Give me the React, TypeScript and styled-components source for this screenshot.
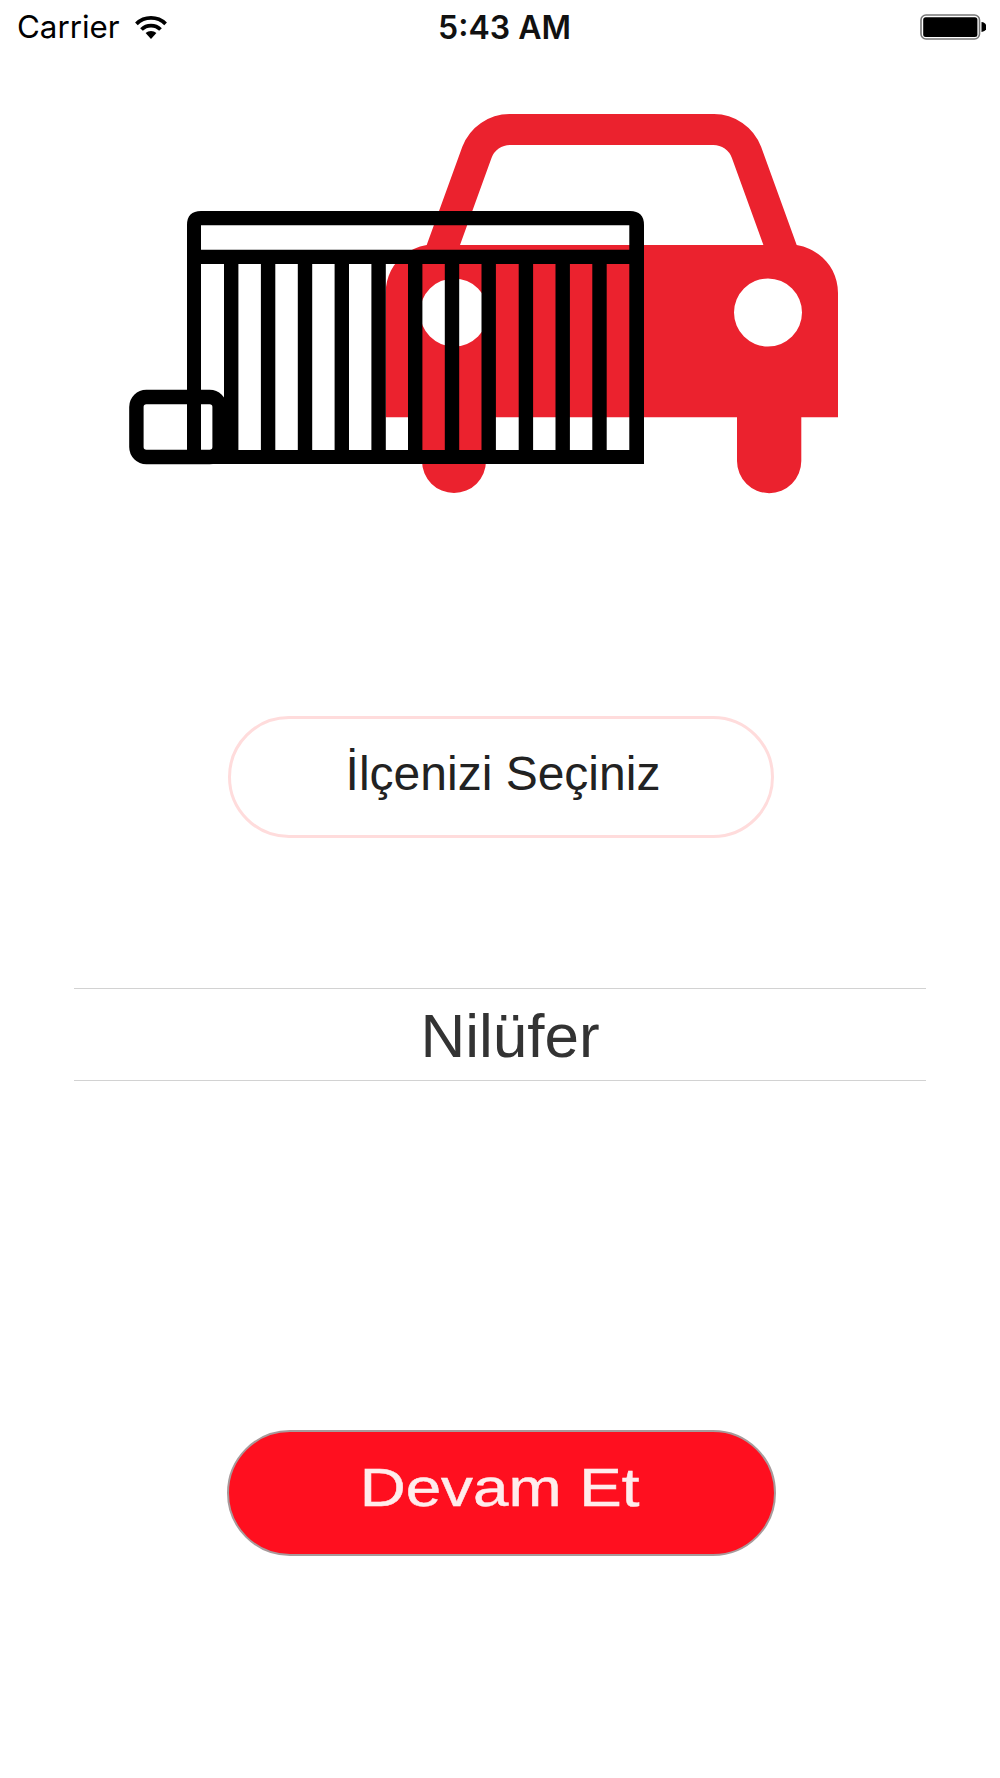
import React from "react";
import styled, { createGlobalStyle } from "styled-components";

const Global = createGlobalStyle`
  html, body { margin: 0; padding: 0; background: #fff; }
  body { font-family: "Liberation Sans", Arial, sans-serif; }
`;

const Page = styled.div`
  width: 1000px;
  height: 1778px;
  overflow: hidden;
  display: flex;
  flex-direction: column;
  background: #fff;
`;

const StatusBar = styled.div`
  height: 54px;
  padding: 0 14px 0 17px;
  display: grid;
  grid-template-columns: 1fr auto 1fr;
  align-items: center;
  color: #000;
`;

const StatusLeft = styled.div`
  display: flex;
  align-items: center;
  gap: 14px;
`;

const Carrier = styled.span`
  font-family: Inter, "Liberation Sans", sans-serif;
  font-size: 31.3px;
`;

const Clock = styled.span`
  font-family: Inter, "Liberation Sans", sans-serif;
  font-size: 32px;
  font-weight: 600;
  color: #111;
  transform: translateX(3px);
`;

const StatusRight = styled.div`
  display: flex;
  justify-content: flex-end;
`;

const Logo = styled.svg`
  display: block;
  margin: 60px 0 0 129px;
  width: 710px;
  height: 380px;
`;

const SelectPill = styled.div`
  box-sizing: border-box;
  align-self: flex-start;
  margin: 222px 0 0 228px;
  width: 546px;
  height: 122px;
  border: 3px solid #ffdcdc;
  border-radius: 61px;
  display: flex;
  align-items: center;
  justify-content: center;
  font-size: 48px;
  color: #222;
  padding: 0 0 8px 4px;
`;

const PickerRow = styled.div`
  box-sizing: border-box;
  align-self: flex-start;
  margin: 150px 0 0 74px;
  width: 852px;
  height: 93px;
  border-top: 1.5px solid #d2d2d2;
  border-bottom: 1.5px solid #d2d2d2;
  display: flex;
  align-items: center;
  justify-content: center;
  padding: 2px 0 0 20px;
  font-size: 62px;
  color: #333;
`;

const ContinueButton = styled.button`
  box-sizing: border-box;
  align-self: flex-start;
  margin: 349px 0 0 227px;
  width: 549px;
  height: 126px;
  border: 2px solid #a89a9b;
  border-radius: 63px;
  background: #ff0f1f;
  display: flex;
  align-items: center;
  justify-content: center;
  padding: 0 3px 12px 0;
  font-family: inherit;
  color: #ffecec;
`;

const ContinueLabel = styled.span`
  display: block;
  font-size: 54px;
  -webkit-text-stroke: 0.5px #ffecec;
  transform: scaleX(1.18);
`;

const gateBars = [224, 260.9, 297.8, 334.6, 371.4, 408, 444.8, 481.5, 518.7, 555.5, 592.3];

function WifiIcon() {
  return (
    <svg width="34" height="25" viewBox="0 0 34 25">
      <path d="M17 24 L11.6 18 A8 8 0 0 1 22.4 18 Z" fill="#000" />
      <path d="M7.5 14.5 A13.5 13.5 0 0 1 26.5 14.5" fill="none" stroke="#000" strokeWidth="3.8" />
      <path d="M2.4 8.8 A21 21 0 0 1 31.6 8.8" fill="none" stroke="#000" strokeWidth="3.8" />
    </svg>
  );
}

function BatteryIcon() {
  return (
    <svg width="66.5" height="26" viewBox="0 0 66.5 26">
      <rect x="1" y="1" width="58.5" height="24" rx="5" fill="none" stroke="#777" strokeWidth="1.6" />
      <rect x="3.2" y="3.2" width="54.2" height="19.8" rx="2.5" fill="#000" />
      <path d="M61.5 8 C65 8.5 66.5 10.5 66.5 13 C66.5 15.5 65 17.5 61.5 18 Z" fill="#000" />
    </svg>
  );
}

function CarAndGate() {
  return (
    <Logo viewBox="129 114 710 380">
      <path
        fill="#eb222e"
        fillRule="evenodd"
        d="M426.7 245 L462.3 146.8 A50.7 50.7 0 0 1 510 114 H713.4 A50.7 50.7 0 0 1 761.1 146.8 L796.7 245 C820 249 838 268 838 293 V417.3 H801.3 V461 A32 32 0 0 1 737 461 V417.3 H486 V461 A32 32 0 0 1 422 461 V417.3 H385.7 V293 C385.7 268 403.4 249 426.7 245 Z
           M460 245 L491.5 158 A19.7 19.7 0 0 1 510 145 H713.4 A19.7 19.7 0 0 1 731.9 158 L763.4 245 Z
           M420 312.5 A34 34 0 1 0 488 312.5 A34 34 0 1 0 420 312.5 Z
           M734 312.5 A34 34 0 1 0 802 312.5 A34 34 0 1 0 734 312.5 Z"
      />
      <path
        fill="#000"
        fillRule="evenodd"
        d="M187 464 V225 Q187 211 201 211 H630 Q644 211 644 225 V464 Z
           M201 225.3 V249.7 H629.3 V225.3 Z
           M201 264 V450 H629.3 V264 Z"
      />
      {gateBars.map((x) => (
        <rect key={x} x={x} y="264" width="14.4" height="186" fill="#000" />
      ))}
      <rect x="136.4" y="397" width="83.2" height="60" rx="10" fill="none" stroke="#000" strokeWidth="14.4" />
    </Logo>
  );
}

export default function App() {
  return (
    <Page>
      <Global />
      <StatusBar>
        <StatusLeft>
          <Carrier>Carrier</Carrier>
          <WifiIcon />
        </StatusLeft>
        <Clock>5:43 AM</Clock>
        <StatusRight>
          <BatteryIcon />
        </StatusRight>
      </StatusBar>
      <CarAndGate />
      <SelectPill>İlçenizi Seçiniz</SelectPill>
      <PickerRow>Nilüfer</PickerRow>
      <ContinueButton>
        <ContinueLabel>Devam Et</ContinueLabel>
      </ContinueButton>
    </Page>
  );
}
